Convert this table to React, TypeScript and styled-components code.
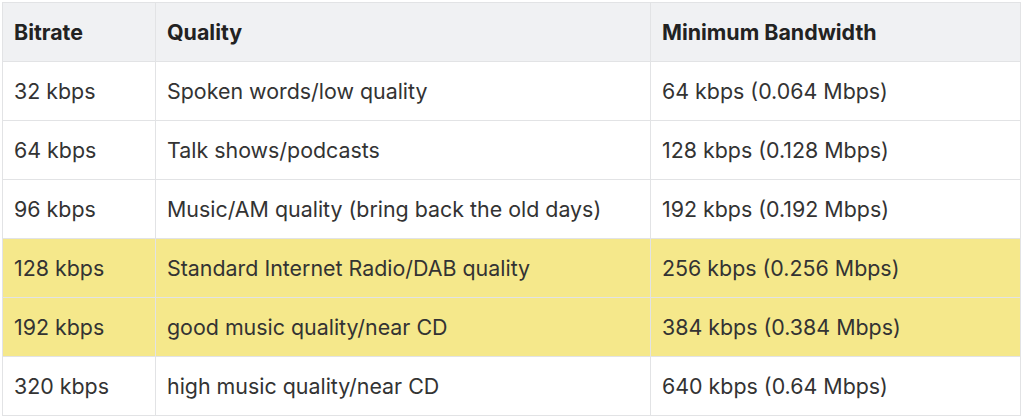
import React from 'react'
import styled, { createGlobalStyle } from 'styled-components'

const Global = createGlobalStyle`
  body {
    margin: 0;
    background: #fff;
    font-family: Inter, "Noto Sans", "Liberation Sans", sans-serif;
  }
`

const Wrap = styled.div`
  padding: 2px 3px 0 2px;
`

const Table = styled.table`
  width: 1019px;
  border-collapse: collapse;
  table-layout: fixed;
  font-size: 21.4px;
  color: #333;
`

const Row = styled.tr<{ $hl?: boolean }>`
  height: 59px;
  background: ${p => (p.$hl ? '#f5e88b' : '#fff')};
`

const Th = styled.th`
  text-align: left;
  font-weight: 700;
  color: #222;
  background: #f0f1f3;
  padding: 0 11px;
  border: 1px solid #e2e3e5;
`

const Td = styled.td`
  padding: 0 11px;
  border: 1px solid #e2e3e5;
`

type Item = { bitrate: string, quality: string, bandwidth: string, hl?: boolean }

const rows: Item[] = [
  { bitrate: '32 kbps', quality: 'Spoken words/low quality', bandwidth: '64 kbps (0.064 Mbps)' },
  { bitrate: '64 kbps', quality: 'Talk shows/podcasts', bandwidth: '128 kbps (0.128 Mbps)' },
  { bitrate: '96 kbps', quality: 'Music/AM quality (bring back the old days)', bandwidth: '192 kbps (0.192 Mbps)' },
  { bitrate: '128 kbps', quality: 'Standard Internet Radio/DAB quality', bandwidth: '256 kbps (0.256 Mbps)', hl: true },
  { bitrate: '192 kbps', quality: 'good music quality/near CD', bandwidth: '384 kbps (0.384 Mbps)', hl: true },
  { bitrate: '320 kbps', quality: 'high music quality/near CD', bandwidth: '640 kbps (0.64 Mbps)' },
]

const App = () => {
  return (
    <>
      <Global />
      <Wrap>
        <Table>
          <colgroup>
            <col style={{ width: 153 }} />
            <col style={{ width: 495 }} />
            <col />
          </colgroup>
          <thead>
            <Row>
              <Th>Bitrate</Th>
              <Th>Quality</Th>
              <Th>Minimum Bandwidth</Th>
            </Row>
          </thead>
          <tbody>
            {rows.map((r, i) => (
              <Row key={i} $hl={r.hl}>
                <Td>{r.bitrate}</Td>
                <Td>{r.quality}</Td>
                <Td>{r.bandwidth}</Td>
              </Row>
            ))}
          </tbody>
        </Table>
      </Wrap>
    </>
  )
}

export default App
